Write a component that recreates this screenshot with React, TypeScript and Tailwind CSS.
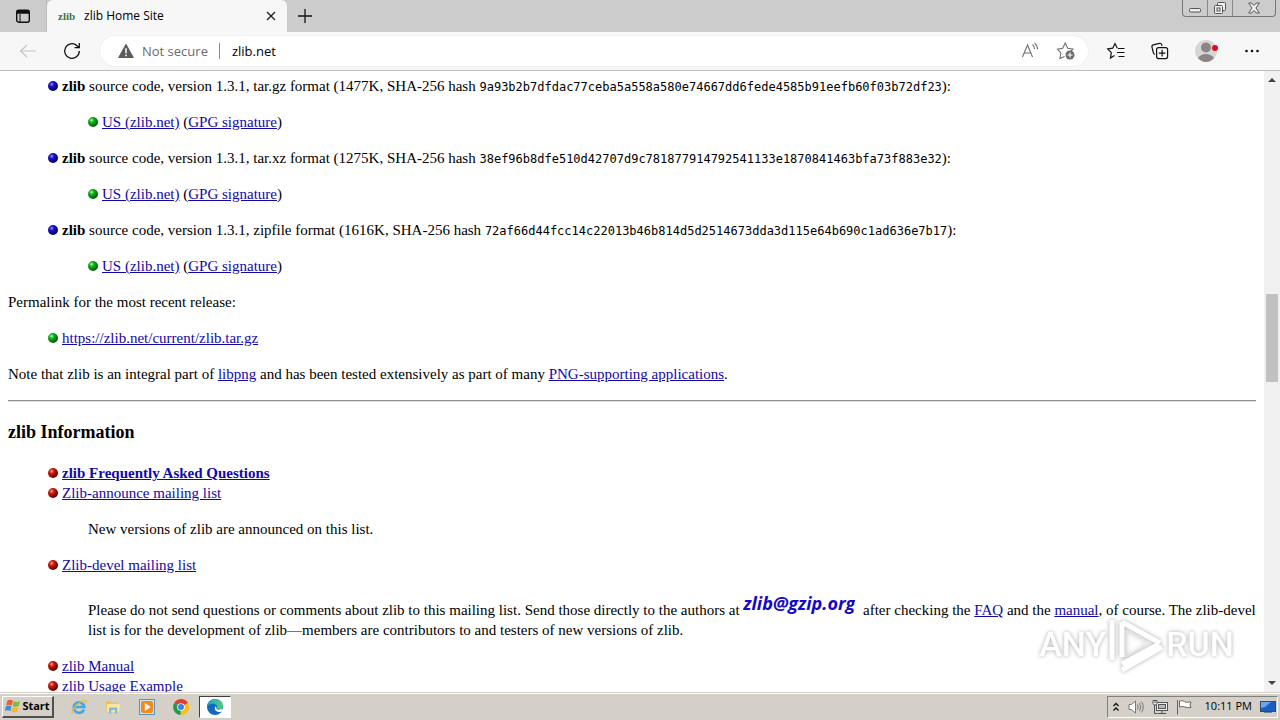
import type { ReactNode } from "react";

const colors = {
  blue: ["#8c8cff", "#1a12c4", "#06005c"],
  green: ["#9dffa4", "#12b21c", "#00560a"],
  red: ["#ff9c8c", "#cc1a0c", "#5c0400"],
};

function Ball({ color }: { color: keyof typeof colors }) {
  const [light, mid, dark] = colors[color];
  return (
    <svg className="mr-1 inline-block size-[10px] align-baseline" viewBox="0 0 10 10" aria-hidden="true">
      <defs>
        <radialGradient id={"ball-" + color} cx="0.36" cy="0.32" r="0.7">
          <stop offset="0" stopColor={light} />
          <stop offset="0.35" stopColor={mid} />
          <stop offset="1" stopColor={dark} />
        </radialGradient>
      </defs>
      <circle cx="5" cy="5" r="5" fill={`url(#ball-${color})`} />
    </svg>
  );
}

function Link({ href = "#", children }: { href?: string; children: ReactNode }) {
  return (
    <a href={href} className="text-[#1208a8] underline">
      {children}
    </a>
  );
}

const releases = [
  { format: "tar.gz", size: "1477K", hash: "9a93b2b7dfdac77ceba5a558a580e74667dd6fede4585b91eefb60f03b72df23" },
  { format: "tar.xz", size: "1275K", hash: "38ef96b8dfe510d42707d9c781877914792541133e1870841463bfa73f883e32" },
  { format: "zipfile", size: "1616K", hash: "72af66d44fcc14c22013b46b814d5d2514673dda3d115e64b690c1ad636e7b17" },
];

function TabStrip() {
  return (
    <div className="flex h-8 shrink-0 items-start bg-[#cccccc]">
      <button aria-label="Tab actions" className="flex h-8 w-[47px] items-center justify-center border-r border-[#bdbdbd]">
        <svg className="size-4" viewBox="0 0 16 16" fill="none" stroke="#111" strokeWidth="1.4">
          <rect x="1.7" y="2.2" width="12.6" height="12" rx="2" />
          <path d="M2.500 3h11v2h-11z" fill="#111" />
          <path d="M5 6v8" strokeWidth="1" />
        </svg>
      </button>
      <div className="flex h-8 w-60 items-center rounded-t-md bg-[#f7f7f7] pr-1.5 pl-[11px]">
        <span aria-hidden="true" className="w-[18px] font-['Liberation_Serif',serif] text-[11px] font-bold text-[#39753f]">
          zlib
        </span>
        <span className="ml-2 flex-1 text-xs text-black">zlib Home Site</span>
        <button aria-label="Close tab" className="flex size-5 items-center justify-center">
          <svg className="size-4" viewBox="0 0 16 16" stroke="#222" strokeWidth="1.4">
            <path d="M4 4l8 8M12 4l-8 8" />
          </svg>
        </button>
      </div>
      <button aria-label="New tab" className="flex h-8 w-9 items-center justify-center">
        <svg className="size-4" viewBox="0 0 16 16" stroke="#111" strokeWidth="1.3">
          <path d="M1 8h14M8 1v14" />
        </svg>
      </button>
      <div className="mr-1 ml-auto flex h-[17px] divide-x divide-[#888] rounded-b border border-t-0 border-[#777]">
        <button aria-label="Minimize" className="flex w-[25px] items-center justify-center">
          <svg className="h-3 w-3" viewBox="0 0 12 12" fill="#eee" stroke="#555">
            <rect x="0.5" y="6.5" width="11" height="3.5" rx="1" />
          </svg>
        </button>
        <button aria-label="Restore" className="flex w-[25px] items-center justify-center">
          <svg className="h-3.5 w-3.5" viewBox="0 0 14 14" fill="#eee" stroke="#555">
            <rect x="4.5" y="1.5" width="8" height="8" rx="1" />
            <rect x="1.5" y="4.5" width="8" height="8" rx="1" />
            <rect x="4" y="7" width="3" height="3" />
          </svg>
        </button>
        <button aria-label="Close" className="flex w-[42px] items-center justify-center">
          <svg className="h-3 w-3" viewBox="0 0 12 12" fill="#eee" stroke="#555">
            <path d="M.7 1h3L6 3.5 8.300 1h3L8 6l3.300 5h-3L6 8.500 3.700 11h-3L4 6z" />
          </svg>
        </button>
      </div>
    </div>
  );
}

function Toolbar() {
  return (
    <div className="flex h-[39px] shrink-0 items-center border-b border-[#bdbdbd] bg-[#f7f7f7]">
      <button aria-label="Back" className="ml-[18px] flex size-5 items-center justify-center">
        <svg className="size-5" viewBox="0 0 20 20" fill="none" stroke="#c6c6c6" strokeWidth="1.2">
          <path d="M18 10H3M9 4l-6.500 6L9 16" />
        </svg>
      </button>
      <button aria-label="Refresh" className="ml-6 flex size-5 items-center justify-center">
        <svg className="size-5" viewBox="0 0 20 20" fill="none" stroke="#111" strokeWidth="1.300">
          <path d="M17.300 10a7.300 7.300 0 1 1-2.300-5.300L17 6.500M17.300 2v4.700h-4.700" />
        </svg>
      </button>
      <div className="ml-[18px] flex h-[30px] flex-1 items-center rounded-full bg-white pr-3 pl-[18px] text-sm ring-1 ring-[#f0f0f0]">
        <svg className="h-4 w-4" viewBox="0 0 16 16" aria-hidden="true">
          <path d="M8 1.300 15.300 14.500H.7z" fill="#5c5c5c" stroke="#5c5c5c" strokeLinejoin="round" />
          <path d="M8 5.300v5M8 11.600v1.600" stroke="#fff" strokeWidth="1.500" />
        </svg>
        <span className="ml-2 text-[13px] text-[#6b6b6b]">Not secure</span>
        <span className="ml-[11px] mr-3 h-4 w-px bg-[#8a8a8a]" />
        <input
          aria-label="Address"
          defaultValue="zlib.net"
          className="min-w-0 flex-1 bg-transparent text-[13px] text-black outline-none"
        />
        <button aria-label="Read aloud" className="flex size-5 items-center justify-center">
          <svg className="size-5" viewBox="0 0 20 20" fill="none" stroke="#707070" strokeWidth="1.100">
            <path d="M2.500 16 7.500 4l5 12M4.300 12h6.400M12.500 3.500q2 1.700 2 4.500M14.500 1.800q3 2.500 3 6.500" />
          </svg>
        </button>
        <button aria-label="Add to favorites" className="ml-4 flex size-5 items-center justify-center">
          <svg className="size-5" viewBox="0 0 20 20" fill="none" stroke="#707070" strokeWidth="1.100">
            <path d="M8.500 15.500 4 17.500l.8-5.500L1.500 8.200l5.200-.9L9.200 2l2.500 5.300 5.300.8-2 2" />
            <circle cx="14" cy="14" r="4.500" fill="#6b6b6b" stroke="none" />
            <path d="M14 11.500v5M11.500 14h5" stroke="#fff" />
          </svg>
        </button>
      </div>
      <button aria-label="Favorites" className="ml-[18px] flex size-5 items-center justify-center">
        <svg className="size-5" viewBox="0 0 20 20" fill="none" stroke="#111" strokeWidth="1.200">
          <path d="M8.500 14.500 4.500 17l.8-5.300L1.700 8l5-.8L9 2.500l2.300 4.700M12 7.500h6.500M11 11.500h7.500M12.500 15.500h6" />
        </svg>
      </button>
      <button aria-label="Collections" className="ml-6 flex size-5 items-center justify-center">
        <svg className="size-5" viewBox="0 0 20 20" fill="none" stroke="#111" strokeWidth="1.200">
          <path d="M5 13.500c-1-.4-1.500-1-1.700-2L2 6.200C1.700 5 2.200 4.200 3.300 3.900L9.500 2.300c1-.2 1.900.3 2.200 1.300l.4 1.400" />
          <rect x="6.600" y="6.600" width="11" height="11" rx="2" />
          <path d="M12.100 8.800v6.600M8.800 12.100h6.600" />
        </svg>
      </button>
      <button aria-label="Profile" className="ml-6 flex size-6 items-center justify-center">
        <svg className="size-6" viewBox="0 0 24 24">
          <circle cx="12" cy="12" r="11" fill="#d6d6d6" />
          <circle cx="12" cy="8.500" r="5" fill="#8d8585" />
          <path d="M4 19q3-4 8-4t8 4q-3.500 4-8 4t-8-4" fill="#8d8585" />
          <circle cx="21" cy="9" r="3" fill="#e00b1c" />
        </svg>
      </button>
      <button aria-label="Settings and more" className="mr-[18px] ml-6 flex size-5 items-center justify-center">
        <svg className="size-5" viewBox="0 0 20 20" fill="#111">
          <circle cx="4.500" cy="10" r="1.300" />
          <circle cx="10" cy="10" r="1.300" />
          <circle cx="15.500" cy="10" r="1.300" />
        </svg>
      </button>
    </div>
  );
}

function PageContent() {
  return (
    <main className="min-w-0 flex-1 overflow-hidden px-2 pt-[5px] font-['Liberation_Serif',serif] text-[15px] leading-5 text-black">
      <ul className="flex flex-col gap-4 pl-10">
        {releases.map((r) => (
          <li key={r.hash} className="whitespace-nowrap">
            <Ball color="blue" />
            <b>zlib</b> source code, version 1.3.1, {r.format} format ({r.size}, SHA-256 hash{" "}
            <code className="font-['DejaVu_Sans_Mono',monospace] text-xs leading-4">{r.hash}</code>):
            <p className="mt-4 pl-10">
              <Ball color="green" />
              <Link>US (zlib.net)</Link> (<Link>GPG signature</Link>)
            </p>
          </li>
        ))}
      </ul>
      <p className="my-4">Permalink for the most recent release:</p>
      <p className="pl-10">
        <Ball color="green" />
        <Link>https://zlib.net/current/zlib.tar.gz</Link>
      </p>
      <p className="my-4">
        Note that zlib is an integral part of <Link>libpng</Link> and has been tested extensively as part of many{" "}
        <Link>PNG-supporting applications</Link>.
      </p>
      <hr className="h-0.5 border-t border-b border-t-[#8f8f8f] border-b-[#dedede]" />
      <h3 className="mt-5 mb-[21px] text-lg leading-5 font-bold">zlib Information</h3>
      <ul className="pl-10">
        <li>
          <Ball color="red" />
          <b>
            <Link>zlib Frequently Asked Questions</Link>
          </b>
        </li>
        <li>
          <Ball color="red" />
          <Link>Zlib-announce mailing list</Link>
          <p className="my-4 pl-10">New versions of zlib are announced on this list.</p>
        </li>
        <li>
          <Ball color="red" />
          <Link>Zlib-devel mailing list</Link>
          <p className="my-4 pl-10">
            Please do not send questions or comments about zlib to this mailing list. Send those directly to the authors at{" "}
            <span className="mr-1 inline-block h-6 overflow-hidden font-['Open_Sans',sans-serif] text-lg leading-6 font-bold text-[#1408c8] italic">
              zlib@gzip.org
            </span>{" "}
            after checking the <Link>FAQ</Link> and the <Link>manual</Link>, of course. The zlib-devel list is for the
            development of zlib—members are contributors to and testers of new versions of zlib.
          </p>
        </li>
        <li>
          <Ball color="red" />
          <Link>zlib Manual</Link>
        </li>
        <li>
          <Ball color="red" />
          <Link>zlib Usage Example</Link>
        </li>
      </ul>
    </main>
  );
}

function Scrollbar() {
  return (
    <div className="flex w-4 flex-col items-center bg-[#f1f1f1]" aria-hidden="true">
      <svg className="h-[18px] w-4" viewBox="0 0 16 18" fill="#444">
        <path d="M4 11 8 7l4 4z" />
      </svg>
      <div className="flex w-full flex-1 flex-col items-center">
        <div className="grow-[205]" />
        <div className="w-3 grow-[88] bg-[#c1c1c1]" />
        <div className="grow-[292]" />
      </div>
      <svg className="h-[18px] w-4" viewBox="0 0 16 18" fill="#444">
        <path d="M4 7h8l-4 4z" />
      </svg>
    </div>
  );
}

function Watermark() {
  return (
    <div className="pointer-events-none absolute right-[46px] bottom-[46px] flex h-[60px] items-center font-['Roboto',sans-serif] text-[34px] leading-[40px] font-medium text-white drop-shadow-[0_0_2px_#aaa]">
      <span>ANY</span>
      <svg className="h-[60px] w-[60px]" viewBox="0 0 60 60" fill="none" stroke="#fff" strokeWidth="5" strokeLinejoin="round">
        <path d="M6 46V6M16 43V8M16 8l38 21M16 50l37-20M16 56l40-23" />
        <path d="M20 17v26l22-14z" stroke="#e4e4e4" strokeWidth="1" />
      </svg>
      <span>RUN</span>
    </div>
  );
}

const launcher = "flex h-[22px] w-8 items-center justify-center";

function Taskbar() {
  return (
    <footer className="flex h-7 shrink-0 items-center border-t border-[#d4d0c8] bg-[#d4d0c8] shadow-[inset_0_1px_#fff]">
      <button className="ml-0.5 flex h-[22px] w-[52px] items-center justify-center gap-px border-t border-r-2 border-b-2 border-l border-t-white border-r-[#505050] border-b-[#505050] border-l-white font-['Open_Sans',sans-serif] text-[11px] font-bold">
        <svg className="size-4 shrink-0" viewBox="0 0 16 16" aria-hidden="true">
          <path d="M2.500 2.500Q5 1 8 2.700L6.800 7.500Q4 6 1.200 7.300z" fill="#e8602c" />
          <path d="M8.800 3.200q3 1.500 6.200 0l-1.300 4.900q-3 1.400-6.100-.2z" fill="#82b83c" />
          <path d="M1 8.300q2.800-1.400 5.500.1L5.300 13Q2.500 11.700-.1 13z" fill="#3d8ddb" />
          <path d="M7.300 8.900q3 1.500 6.100.1L12.200 13.800q-3 1.500-6-.3z" fill="#f4b928" />
        </svg>
        Start
      </button>
      <div className="ml-[9px] flex items-center gap-0.5">
        <button aria-label="Internet Explorer" className={launcher}>
          <svg className="size-4" viewBox="0 0 16 16" fill="none">
            <path d="M13 10.500A5.300 5.300 0 1 1 13.300 8H4" stroke="#42a9e4" strokeWidth="2.700" />
            <path d="M1.500 15C-.5 13 4 6.500 9 3.200S16 1 15 4.500" stroke="#e9b941" strokeWidth="1.300" />
          </svg>
        </button>
        <button aria-label="File Explorer" className={launcher}>
          <svg className="size-4" viewBox="0 0 16 16">
            <path d="M1 2.500h5l1 1.300h7V13H1z" fill="#e2bd58" />
            <path d="M2 4.800h13l-.8 8.200H1.500z" fill="#f9e7a0" />
            <path d="M4 14.500V9.700q0-1.200 1.200-1.200h5.800q1.200 0 1.200 1.200v4.800H10v-3.500H6.300v3.500z" fill="#79bde4" />
          </svg>
        </button>
        <button aria-label="Media Player" className={launcher}>
          <svg className="size-4" viewBox="0 0 16 16">
            <rect x="0.500" y="0.500" width="15" height="15" fill="#cfe3f3" stroke="#5793c4" />
            <rect x="2" y="2" width="12" height="12" rx="2" fill="#f28a18" />
            <path d="M5.800 4v8l6-4z" fill="#fff" />
          </svg>
        </button>
        <button aria-label="Chrome" className={launcher}>
          <svg className="size-4" viewBox="0 0 16 16">
            <path d="M8 8 1.200 4A8 8 0 0 1 15 4z" fill="#e33b2e" />
            <path d="M8 8l7-4A8 8 0 0 1 7.500 16z" fill="#fbc116" />
            <path d="M8 8l-.5 8A8 8 0 0 1 1.200 4z" fill="#229a4a" />
            <circle cx="8" cy="8" r="3.800" fill="#fff" />
            <circle cx="8" cy="8" r="3" fill="#3c7fea" />
          </svg>
        </button>
        <button
          aria-label="Edge"
          className="flex h-[22px] w-8 items-center justify-center border border-t-[#404040] border-r-white border-b-white border-l-[#404040] bg-white"
        >
          <svg className="size-4" viewBox="0 0 16 16">
            <defs>
              <linearGradient id="edge-top">
                <stop offset="0" stopColor="#229ed5" />
                <stop offset="1" stopColor="#55cf72" />
              </linearGradient>
            </defs>
            <circle cx="8" cy="8" r="8" fill="#1269b8" />
            <path d="M.1 7C1 2.500 4.500 0 8.300 0 13 0 16 3.200 16 6.500c0 2.400-1.700 4-4 4-2 0-3-.8-2.500-1.500C11 7 9 4.800 6 4.800 3.300 4.800 1 6 .1 7" fill="url(#edge-top)" />
            <path d="M9.500 9c-.6 1 .6 1.800 2.500 1.800 1.500 0 2.600-.4 3.500-1.200v2.500c-1.300.9-2.900 1.100-4.400.7C8.400 12.200 7 10 8.300 7.300z" fill="#fff" />
          </svg>
        </button>
      </div>
      <div className="mr-0.5 ml-auto flex h-[22px] items-center border border-t-[#808080] border-r-white border-b-white border-l-[#808080] pr-px pl-1">
        <button aria-label="Show hidden icons" className="flex size-2 items-center justify-center">
          <svg className="h-2.5 w-2" viewBox="0 0 8 10" fill="none" stroke="#111" strokeWidth="1.300">
            <path d="M1.500 4 4 1.500 6.500 4M1.500 8.500 4 6l2.500 2.500" />
          </svg>
        </button>
        <svg className="ml-2 size-4" viewBox="0 0 16 16" fill="#fff" stroke="#777" role="img" aria-label="Volume">
          <path d="M1 5.500h2.500L7.500 2v12l-4-3.500H1z" />
          <path d="M9.500 5.500q1.500 2.500 0 5M11.500 4q2.500 4 0 8M13.500 2.500q3.500 5.500 0 11" fill="none" />
        </svg>
        <svg className="ml-2 size-4" viewBox="0 0 16 16" fill="#eee" stroke="#555" role="img" aria-label="Network">
          <rect x="4.500" y="3.500" width="11" height="8" />
          <rect x="6.500" y="5.500" width="7" height="4" fill="#bbb" />
          <path d="M6 14.500h8M10 11.500v3M2.500 6v8.500h3" fill="none" />
          <path d="M1 1.500h4v3L4 6H2L1 4.500zM3 1v3" />
        </svg>
        <svg className="ml-2 size-4" viewBox="0 0 16 16" fill="#fff" stroke="#666" role="img" aria-label="Action Center">
          <path d="M1.500 1v14.500M3.500 2q3-1 5 .5t4.500.5h2l-1 3 1 2.500q-3.500.5-6-.5T3.500 8z" />
        </svg>
        <time className="ml-[13px] text-[11px] text-black">10:11 PM</time>
        <svg className="ml-2 size-4" viewBox="0 0 16 16" role="img" aria-label="Show desktop">
          <rect x="0.500" y="2.500" width="15" height="10" fill="#1d5fc0" stroke="#3a4a62" />
          <path d="M1 3h10L5 8 1 9z" fill="#69a8ec" />
          <path d="M4 13.500h8" stroke="#6f8199" />
        </svg>
      </div>
    </footer>
  );
}

export default function App() {
  return (
    <div className="relative flex h-screen flex-col overflow-hidden bg-white font-['Open_Sans','Noto_Sans',sans-serif]">
      <TabStrip />
      <Toolbar />
      <div className="flex min-h-0 flex-1">
        <PageContent />
        <Scrollbar />
      </div>
      <Watermark />
      <Taskbar />
    </div>
  );
}
